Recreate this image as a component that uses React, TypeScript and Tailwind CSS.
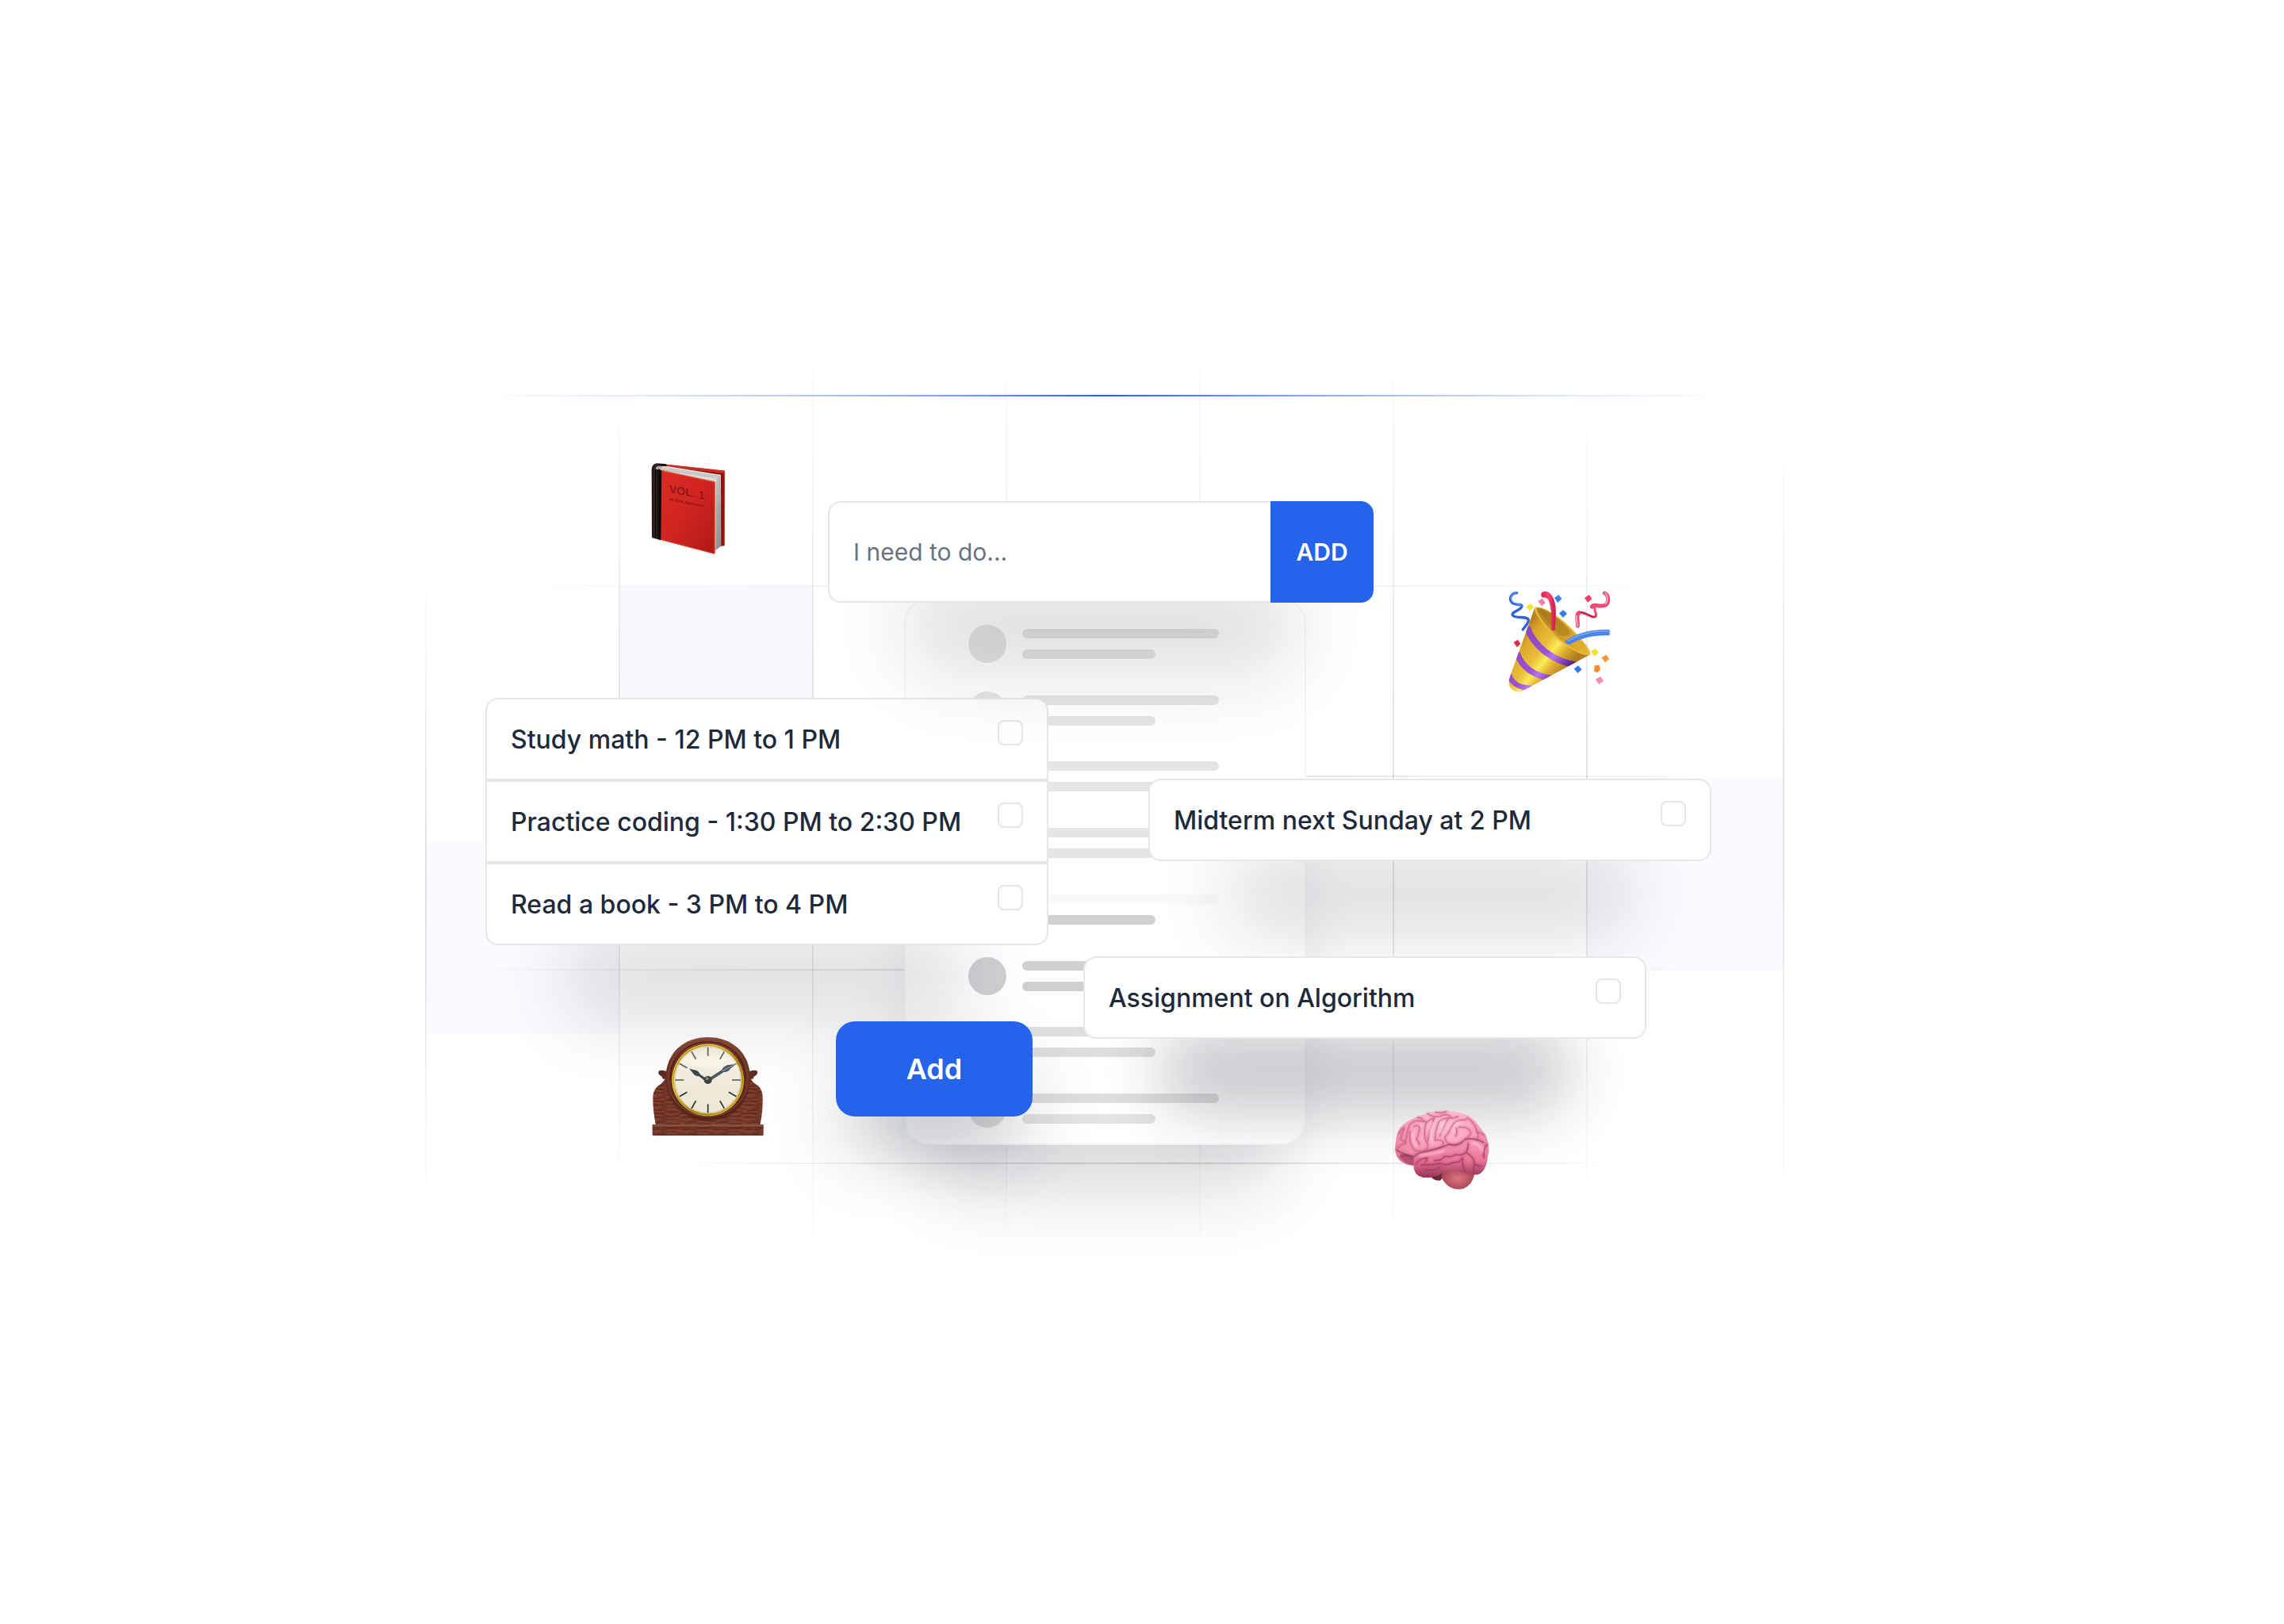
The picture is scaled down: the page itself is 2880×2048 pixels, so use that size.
import type { ReactNode } from "react";

function Book() {
  return (
    <svg viewBox="0 0 420 420" className="block w-full" role="img" aria-label="Book">
      <defs>
        <linearGradient id="bk-cover" x1="0" y1="0" x2="1" y2="1">
          <stop offset="0" stopColor="#dc2c25" />
          <stop offset="0.5" stopColor="#cf2420" />
          <stop offset="1" stopColor="#b01815" />
        </linearGradient>
        <linearGradient id="bk-pages" x1="0" y1="0" x2="0" y2="1">
          <stop offset="0" stopColor="#e6e6e6" />
          <stop offset="0.5" stopColor="#b4b4b4" />
          <stop offset="1" stopColor="#8e8e8e" />
        </linearGradient>
        <linearGradient id="bk-spine" x1="0" y1="0" x2="1" y2="0">
          <stop offset="0" stopColor="#1c1210" />
          <stop offset="0.25" stopColor="#3a2622" />
          <stop offset="0.5" stopColor="#0d0808" />
          <stop offset="1" stopColor="#1d1616" />
        </linearGradient>
      </defs>
      <path d="M118 49 L342 72 L340 354 L300 362 L100 330 L90 60 Z" fill="#7d0f0d" />
      <path d="M112 46 L338 70 Q343 71 343 77 L342 82 L110 55 Z" fill="#c92d22" />
      <path d="M329 88 L342 78 L341 350 Q340 356 334 354 L328 352 Z" fill="#8f100f" />
      <path d="M341 78 L340 352" stroke="#d8502f" strokeWidth="3" />
      <path d="M86 56 L110 52 L327 86 L328 356 L303 374 L110 320 L100 70 Z" fill="url(#bk-pages)" />
      <g fill="none" stroke="#8d8d8d" strokeWidth="1.8">
        <path d="M92 59 L323 91 L323 358" />
        <path d="M94 63 L318 96 L318 362" />
        <path d="M97 66 L312 101 L312 367" />
        <path d="M104 70 L307 107 L307 371" stroke="#efefef" />
      </g>
      <path d="M92 57 L112 56 L326 88 L304 112 L104 70 Z" fill="#dedede" opacity="0.75" />
      <path d="M98 66 L318 97 M106 60 L322 92" stroke="#a0a0a0" strokeWidth="1.6" fill="none" />
      <path d="M98 68 L302 111 Q306 112 306 118 L305 382 Q304 387 298 385 L98 332 Z" fill="url(#bk-cover)" />
      <path d="M105 70 L301 113 Q304 114 304 119 L303 381" fill="none" stroke="#f06a3f" strokeWidth="3.5" opacity="0.85" />
      <path d="M100 331 L299 384" stroke="#e2552c" strokeWidth="3" opacity="0.8" />
      <path d="M65 66 Q67 45 84 43 L116 45 Q124 47 122 54 L92 53 Q80 55 82 64 L103 70 L100 334 L66 324 Z" fill="url(#bk-spine)" />
      <path d="M82 64 Q80 55 92 53 L106 54 L100 62 Z" fill="#a8a8a8" />
      <path d="M80 66 L80 326" stroke="#000" strokeWidth="3" />
      <g fontFamily="Liberation Sans, sans-serif" transform="matrix(1 0.2 0 1 132 154)">
        <text x="1" y="2" fontSize="42" fontWeight="700" fill="#ee5b4e" opacity="0.55">VOL. 1</text>
        <text x="0" y="0" fontSize="42" fontWeight="700" fill="#8e1512">VOL. 1</text>
        <text x="0" y="29" fontSize="14" fontWeight="700" fill="#861311">by John Appleseed</text>
      </g>
    </svg>
  );
}

function Party() {
  return (
    <svg viewBox="0 0 510 480" className="block w-full" role="img" aria-label="Party popper">
      <defs>
        <linearGradient id="pp-cone" x1="100" y1="220" x2="270" y2="360" gradientUnits="userSpaceOnUse">
          <stop offset="0" stopColor="#b9801e" />
          <stop offset="0.18" stopColor="#dfa62a" />
          <stop offset="0.45" stopColor="#e8be38" />
          <stop offset="0.62" stopColor="#fbea58" />
          <stop offset="0.76" stopColor="#e0b432" />
          <stop offset="1" stopColor="#b27a1e" />
        </linearGradient>
        <linearGradient id="pp-in" x1="170" y1="110" x2="370" y2="290" gradientUnits="userSpaceOnUse">
          <stop offset="0" stopColor="#b08222" />
          <stop offset="0.5" stopColor="#cf9a28" />
          <stop offset="1" stopColor="#e8b731" />
        </linearGradient>
        <linearGradient id="pp-vio" x1="100" y1="220" x2="270" y2="360" gradientUnits="userSpaceOnUse">
          <stop offset="0" stopColor="#8a45c0" />
          <stop offset="0.55" stopColor="#9d52d4" />
          <stop offset="0.68" stopColor="#b878ea" />
          <stop offset="1" stopColor="#5d2394" />
        </linearGradient>
        <linearGradient id="pp-red" x1="0" y1="0" x2="1" y2="0">
          <stop offset="0" stopColor="#d81e4c" />
          <stop offset="0.5" stopColor="#f4476f" />
          <stop offset="1" stopColor="#c9184a" />
        </linearGradient>
        <clipPath id="pp-clip">
          <path d="M166 108 C200 190 290 270 376 286 L116 426 Q82 434 68 400 Q66 385 72 370 Z" />
        </clipPath>
      </defs>
      <path d="M166 108 C200 190 290 270 376 286 L116 426 Q82 434 68 400 Q66 385 72 370 Z" fill="url(#pp-cone)" />
      <g clipPath="url(#pp-clip)" fill="none" stroke="url(#pp-vio)">
        <path d="M136 182 C160 250 230 315 335 328" strokeWidth="24" />
        <path d="M98 280 C115 330 160 372 245 378" strokeWidth="23" />
        <path d="M68 362 C78 392 100 414 160 414" strokeWidth="20" />
      </g>
      <path d="M166 108 C196 98 270 148 322 206 C362 248 384 280 374 288 C348 296 276 256 226 204 C186 162 160 122 166 108 Z" fill="#e9bb35" />
      <path d="M174 110 C202 106 268 152 316 208 C352 248 374 276 368 283 C344 286 280 250 232 200 C194 160 170 124 174 110 Z" fill="url(#pp-in)" />
      <path d="M180 114 C200 150 225 180 262 214 C290 220 300 210 300 200 C260 150 210 116 180 114 Z" fill="#8f5f12" opacity="0.3" />
      <path d="M190 56 C196 44 216 44 228 60 C244 80 247 110 245 150 L242 192 Q236 200 227 190 C230 150 230 110 218 82 C210 66 200 74 194 70 Q188 64 190 56 Z" fill="url(#pp-red)" />
      <path d="M278 238 C320 204 380 190 449 192 L449 214 C390 212 345 222 294 250 Z" fill="#4a86ea" />
      <path d="M290 236 C330 208 385 197 449 197" fill="none" stroke="#7fb0fa" strokeWidth="4" />
      <g fill="none" strokeLinecap="round">
        <path d="M98 53 C76 54 66 76 80 90 C94 102 122 92 116 106 C110 120 76 124 82 138 C90 152 140 138 142 156 C142 170 128 180 121 192" stroke="#2e63d6" strokeWidth="10" />
        <path d="M96 52 C76 56 70 74 82 88 C94 98 116 94 116 102" stroke="#5c98f8" strokeWidth="4" />
        <path d="M396 100 C384 122 404 130 396 142 C386 154 354 122 334 128" stroke="#ef4a76" strokeWidth="9" />
        <path d="M430 54 C446 60 448 92 432 100 C414 108 384 92 382 106 M334 128 C320 134 330 160 328 178" stroke="#ef4a76" strokeWidth="15" />
        <path d="M396 142 C386 152 360 126 340 126" stroke="#b3123f" strokeWidth="4" />
        <path d="M432 54 C442 62 444 84 434 94 M324 140 C322 154 328 164 326 178" stroke="#fb9dc0" strokeWidth="6" />
      </g>
      <path d="M178 84 L194 74 L206 90 L192 103 Z" fill="#f27fa5" />
      <path d="M240 72 L256 60 L268 76 L252 90 Z" fill="#3c82f0" />
      <path d="M134 106 L148 93 L162 106 L148 122 Z" fill="#f5e32c" />
      <path d="M258 130 L274 118 L288 132 L272 147 Z" fill="#357cec" />
      <path d="M354 72 L372 60 L382 76 L366 89 Z" fill="#ea3f6b" />
      <path d="M86 240 L102 230 L112 246 L98 259 Z" fill="#d72f55" />
      <path d="M314 340 L330 328 L344 343 L328 357 Z" fill="#3179ea" />
      <path d="M378 274 L396 264 L408 280 L392 293 Z" fill="#f4e235" />
      <path d="M418 298 L436 287 L448 303 L432 316 Z" fill="#f69a35" />
      <path d="M392 328 L410 326 L414 344 L402 354 L390 350 Z" fill="#f38d2b" />
      <path d="M396 380 L414 369 L426 386 L408 399 Z" fill="#f48bb4" />
    </svg>
  );
}

const TICKS = [0, 30, 60, 90, 120, 150, 180, 210, 240, 270, 300, 330];

function Clock() {
  return (
    <svg viewBox="0 0 540 480" className="block w-full" role="img" aria-label="Mantel clock">
      <defs>
        <pattern id="ck-grain" width="118" height="46" patternUnits="userSpaceOnUse">
          <rect width="118" height="46" fill="#703628" />
          <path d="M4 6 Q20 0 40 8 T84 4 M60 14 Q80 20 112 12 M0 22 Q20 28 46 20 M56 28 Q76 22 104 30 M8 38 Q30 32 54 40 T100 40" stroke="#8e4531" strokeWidth="4" fill="none" strokeLinecap="round" />
          <path d="M10 14 Q28 18 52 12 M70 8 Q90 12 114 6 M54 22 Q80 16 110 22 M4 31 Q24 36 46 30 M64 36 Q84 32 112 36" stroke="#55251b" strokeWidth="3" fill="none" strokeLinecap="round" />
        </pattern>
        <linearGradient id="ck-gold" x1="0" y1="0" x2="1" y2="1">
          <stop offset="0" stopColor="#c89a16" />
          <stop offset="0.3" stopColor="#f6e25c" />
          <stop offset="0.6" stopColor="#b98c12" />
          <stop offset="1" stopColor="#f0d84a" />
        </linearGradient>
        <linearGradient id="ck-face" x1="0" y1="0" x2="0" y2="1">
          <stop offset="0" stopColor="#dcd8c8" />
          <stop offset="0.18" stopColor="#f3eedf" />
          <stop offset="1" stopColor="#ece6d4" />
        </linearGradient>
        <linearGradient id="ck-rim" x1="0" y1="0" x2="0" y2="1">
          <stop offset="0" stopColor="#8a4b3c" />
          <stop offset="0.3" stopColor="#6d3225" />
          <stop offset="1" stopColor="#522419" />
        </linearGradient>
        <clipPath id="ck-clip">
          <circle cx="278" cy="216" r="126" />
        </clipPath>
      </defs>
      <path d="M92 182 Q98 176 122 183 L126 212 L108 212 Q106 202 96 198 Q88 190 92 182 Z M464 182 Q458 176 434 183 L430 212 L448 212 Q450 202 460 198 Q468 190 464 182 Z" fill="#5c2a1f" />
      <path d="M118 208 L438 208 Q446 226 468 238 Q487 254 485 290 Q486 330 476 384 L80 384 Q70 330 70 290 Q68 254 90 238 Q110 226 118 208 Z" fill="url(#ck-grain)" />
      <ellipse cx="278" cy="226" rx="156" ry="146" fill="#3b160f" opacity="0.45" />
      <path d="M118 212 C118 110 190 54 278 54 C366 54 438 110 438 212 C438 300 366 364 278 364 C190 364 118 300 118 212 Z" fill="url(#ck-rim)" />
      <path d="M128 212 C128 118 196 64 278 64 C360 64 428 118 428 212 C428 292 360 354 278 354 C196 354 128 292 128 212 Z" fill="none" stroke="#7d4031" strokeWidth="4" />
      <path d="M136 214 C136 126 200 72 278 72 C356 72 420 126 420 214" fill="none" stroke="#4a1f17" strokeWidth="4" />
      <circle cx="278" cy="216" r="136" fill="url(#ck-gold)" />
      <circle cx="278" cy="216" r="131" fill="none" stroke="#8c6a0c" strokeWidth="2" />
      <circle cx="278" cy="216" r="127" fill="url(#ck-face)" />
      <circle cx="278" cy="216" r="125" fill="none" stroke="#bdb69c" strokeWidth="3" opacity="0.7" />
      <path d="M140 80 H420 V170 Q290 190 140 140 Z" fill="#fffdf4" opacity="0.35" clipPath="url(#ck-clip)" />
      {TICKS.map((a) => (
        <line key={a} x1="278" y1="92" x2="278" y2="125" transform={`rotate(${a} 278 216)`} stroke={a > 90 && a < 270 ? "#2f3133" : "#5a666c"} strokeWidth="5" />
      ))}
      <path d="M207 173 L236 180 Q246 186 250 196 L276 212 L270 222 L244 202 Q226 200 220 188 Z" fill="#3e464b" />
      <path d="M384 155 L350 160 Q336 166 330 178 L280 210 L286 220 L338 186 Q356 186 362 174 Z" fill="#4c585f" />
      <path d="M384 155 L332 182" stroke="#9fb2bd" strokeWidth="3" />
      <circle cx="278" cy="216" r="15" fill="#3b4043" />
      <circle cx="275" cy="211" r="6" fill="#7c8488" />
      <rect x="68" y="384" width="420" height="42" rx="4" fill="url(#ck-grain)" />
      <path d="M76 384 L480 384 Q486 386 488 392 L68 392 Q70 386 76 384 Z" fill="#87503f" />
      <path d="M68 395 L488 395 M70 424 L486 424" stroke="#5a281d" strokeWidth="3" />
    </svg>
  );
}

const UPPER_FOLDS = [
  "M72 150 Q76 132 92 126 Q84 150 78 172 Q96 176 96 186 Q80 188 66 204",
  "M96 186 Q100 150 110 120 Q118 104 140 100 L176 104",
  "M128 122 Q148 112 150 128 Q148 152 138 172 Q150 182 150 190",
  "M114 140 Q108 190 132 212 Q160 222 178 208 Q186 190 172 172 Q166 150 172 116 Q180 96 206 90",
  "M206 90 Q186 130 182 176",
  "M222 104 Q208 140 208 174 Q226 170 238 178 Q246 198 220 204 Q196 210 180 216",
  "M222 104 Q236 90 260 90 Q236 130 226 160",
  "M260 90 Q280 92 296 84",
  "M326 96 Q280 94 268 128 Q260 150 246 160 Q246 180 262 188 Q290 198 310 180",
  "M288 126 Q296 146 286 158 M298 124 Q330 120 344 142 Q340 164 320 170",
  "M140 88 Q160 84 166 104 M180 72 Q196 88 226 84 Q250 70 268 84 M210 68 Q232 74 252 66",
  "M330 88 Q364 112 366 140 Q376 156 368 172 M366 140 Q384 146 396 156",
].join(" ");

const LOWER_FOLDS = [
  "M62 210 Q90 230 128 236 Q140 222 176 216 Q220 206 262 190 Q300 198 320 172 Q350 160 392 182",
  "M136 262 Q156 240 180 240 Q178 252 170 256 M206 250 Q236 252 244 234 Q270 240 286 228 Q310 234 326 220 Q336 200 334 186",
  "M156 268 Q200 268 230 262 Q252 272 276 258 Q300 262 312 240 M172 286 Q210 290 228 276",
  "M326 220 Q356 236 358 262 Q366 274 382 272 M314 244 Q308 270 324 292 M358 262 Q352 276 356 296",
  "M404 190 Q388 214 394 240",
  "M82 234 Q104 226 122 246",
].join(" ");

function Brain() {
  return (
    <svg viewBox="0 0 480 420" className="block w-full" role="img" aria-label="Brain">
      <defs>
        <radialGradient id="br-a" cx="0.5" cy="0.15" r="0.9">
          <stop offset="0" stopColor="#ffc8d8" />
          <stop offset="0.4" stopColor="#fba6c0" />
          <stop offset="0.75" stopColor="#e9809f" />
          <stop offset="1" stopColor="#a93b60" />
        </radialGradient>
        <linearGradient id="br-b" x1="0" y1="0" x2="0" y2="1">
          <stop offset="0" stopColor="#fb9aba" />
          <stop offset="0.55" stopColor="#e87799" />
          <stop offset="1" stopColor="#983055" />
        </linearGradient>
        <radialGradient id="br-c" cx="0.5" cy="0.5" r="0.6">
          <stop offset="0" stopColor="#dd7482" />
          <stop offset="1" stopColor="#a03f4d" />
        </radialGradient>
        <filter id="br-soft" x="-10%" y="-10%" width="120%" height="120%">
          <feGaussianBlur stdDeviation="4" />
        </filter>
      </defs>
      <path d="M190 304 Q200 330 228 326 L262 290 Z" fill="#6c2732" />
      <path d="M232 308 Q250 274 300 280 L358 300 Q350 344 316 357 Q270 366 244 332 Q236 324 232 308 Z" fill="url(#br-c)" />
      <path d="M60 180 C62 130 96 98 140 88 C180 62 250 56 296 68 C350 78 372 116 390 140 C412 170 416 204 408 234 C404 272 392 300 366 304 C340 304 310 292 276 288 C240 290 226 310 190 314 C150 320 126 300 128 270 C98 268 74 256 62 230 Q54 206 60 180 Z" fill="url(#br-a)" />
      <path d="M72 232 Q92 214 130 236 L128 270 Q92 262 72 232 Z" fill="#a84467" opacity="0.75" />
      <path d="M128 262 C124 230 154 216 190 216 C230 200 270 196 300 192 C340 160 380 170 398 200 C414 240 398 300 366 304 C340 304 310 292 276 288 C240 290 226 310 190 314 C150 320 126 300 128 262 Z" fill="url(#br-b)" />
      <g fill="none" strokeLinecap="round" strokeLinejoin="round">
        <path d={UPPER_FOLDS} stroke="#d0587f" strokeWidth="8" opacity="0.5" filter="url(#br-soft)" />
        <path d={LOWER_FOLDS} stroke="#a83c62" strokeWidth="9" opacity="0.5" filter="url(#br-soft)" />
        <path d={UPPER_FOLDS} stroke="#c86084" strokeWidth="3" />
        <path d={LOWER_FOLDS} stroke="#9c3a60" strokeWidth="3" />
      </g>
      <g fill="none" strokeLinecap="round" stroke="#ffe2ea" strokeWidth="8" opacity="0.6" filter="url(#br-soft)">
        <path d="M196 108 Q190 140 194 180 M244 106 Q232 126 232 148 M124 150 Q124 180 138 198" />
        <path d="M300 106 Q282 116 278 136 M150 232 Q190 226 240 214 M350 184 Q380 186 388 216" />
      </g>
    </svg>
  );
}

function Glow({ className }: { className: string }) {
  return <div aria-hidden="true" className={"pointer-events-none absolute bg-gray-900 " + className} />;
}

function Task({ id, children, className }: { id: string; children: ReactNode; className?: string }) {
  return (
    <div className={"relative flex h-[104px] items-start justify-between border-2 border-gray-200 bg-white px-[30px] pt-[26px] " + (className ?? "")}>
      <label htmlFor={id} className="text-[32px] leading-[50px] font-medium whitespace-nowrap text-gray-800">
        {children}
      </label>
      <input id={id} type="checkbox" className="size-8 shrink-0 appearance-none rounded-lg border-2 border-gray-200 bg-white" />
    </div>
  );
}

const ROWS = [
  { dot: "bg-[#e5e5e5]", a: "bg-[#e5e5e5]", b: "bg-[#e5e5e5]" },
  { dot: "bg-[#e5e5e5]", a: "bg-[#e5e5e5]", b: "bg-[#e5e5e5]" },
  { dot: "bg-[#e5e5e5]", a: "bg-[#e5e5e5]", b: "bg-[#e5e5e5]" },
  { dot: "bg-[#e5e5e5]", a: "bg-[#e5e5e5]", b: "bg-[#e5e5e5]" },
  { dot: "bg-[#f9f9f9]", a: "bg-[#f9f9f9]", b: "bg-[#cfd0d2]" },
  { dot: "bg-[#cfd0d2]", a: "bg-[#cfd0d2]", b: "bg-[#cfd0d2]" },
  { dot: "bg-[#dedede]", a: "bg-[#dedede]", b: "bg-[#dedede]" },
  { dot: "bg-[#e0e0e0]", a: "bg-[#dedede]", b: "bg-[#e3e3e3]" },
];

const V_LINES = [
  "mt-[310px] h-[820px]",
  "mt-[70px] h-[1060px]",
  "mt-2 h-[1200px]",
  "mt-2 h-[1200px]",
  "mt-2 h-[1200px]",
  "mt-2 h-[1200px]",
  "mt-[100px] h-[1030px]",
  "ml-1 mt-[140px] h-[990px]",
];

const H_LINES = [
  "-mb-1 ml-5 w-[1640px] via-black/8",
  "ml-5 w-[1680px] via-black/14",
  "ml-5 w-[1680px] via-black/14",
  "ml-[280px] w-[1260px] via-black/14",
];

export default function App() {
  return (
    <main className="flex min-h-screen justify-center overflow-hidden bg-white pt-100 pr-24 font-['Inter',sans-serif]">
      <div className="relative isolate h-[1200px] w-[1712px] shrink-0">
        <div className="absolute top-[340px] left-[245px] h-[243px] w-[244px] bg-[#f9f6fe]" />
        <div className="absolute top-[662px] left-[1px] h-[242px] w-[244px] bg-[#fafaff]" />
        <div className="absolute top-[580px] left-[1465px] h-[243px] w-[247px] bg-[#fafbff]" />
        <div aria-hidden="true" className="absolute inset-0 flex gap-[242px]">
          {V_LINES.map((c, i) => (
            <div key={i} className={"w-[2px] shrink-0 bg-linear-to-b from-transparent via-black/12 to-transparent " + c} />
          ))}
        </div>
        <div aria-hidden="true" className="absolute inset-0 flex flex-col gap-[242px] pt-[338px]">
          {H_LINES.map((c, i) => (
            <div key={i} className={"h-[2px] shrink-0 bg-linear-to-r from-transparent to-transparent " + c} />
          ))}
        </div>
        <div className="absolute inset-x-[60px] top-[98px] h-[2px] bg-[linear-gradient(to_right,transparent,rgba(37,99,235,0.12)_12%,rgba(37,99,235,0.34)_26%,rgba(37,99,235,0.58)_37%,#2563eb_50%,rgba(37,99,235,0.58)_65%,rgba(37,99,235,0.34)_76%,rgba(37,99,235,0.12)_88%,transparent)]" />

        <div className="absolute top-[354px] left-[604px] w-[507px]">
          <Glow className="inset-x-8 top-[290px] bottom-[-56px] rounded-[50px] opacity-16 blur-[48px]" />
          <div className="relative rounded-[32px] border-2 border-black/3 bg-white px-[79px] pt-8 pb-5">
            <div className="flex h-[634px] flex-col justify-between">
              {ROWS.map((r, i) => (
                <div key={i} className="flex gap-5">
                  <div className={"size-12 rounded-full " + r.dot} />
                  <div className="flex flex-col gap-[14px] pt-[5px]">
                    <div className={"h-3 w-[248px] rounded-md " + r.a} />
                    <div className={"h-3 w-[168px] rounded-md " + r.b} />
                  </div>
                </div>
              ))}
            </div>
          </div>
        </div>

        <div className="absolute top-[480px] left-[76px] w-[710px]">
          <Glow className="inset-x-24 top-[300px] h-[104px] rounded-[50px] opacity-15 blur-[48px]" />
          <Task id="math" className="rounded-t-2xl">Study math - 12 PM to 1 PM</Task>
          <Task id="coding">Practice coding - 1:30 PM to 2:30 PM</Task>
          <Task id="book" className="rounded-b-2xl">Read a book - 3 PM to 4 PM</Task>
        </div>

        <form className="absolute top-[232px] left-[508px] flex h-32 w-[688px]">
          <Glow className="inset-x-24 top-[92px] h-32 rounded-[50px] opacity-13 blur-[48px]" />
          <input
            aria-label="New task"
            placeholder="I need to do..."
            className="relative min-w-0 flex-1 rounded-l-2xl border-2 border-r-0 border-gray-200 bg-white px-[30px] text-[30px] text-gray-800 outline-none placeholder:text-gray-500"
          />
          <button type="button" className="relative w-[130px] rounded-r-2xl bg-[#2563eb] text-[30px] font-semibold text-white">
            ADD
          </button>
        </form>

        <div className="absolute top-[582px] left-[912px] w-[710px]">
          <Glow className="inset-x-24 top-[92px] h-[104px] rounded-[50px] opacity-15 blur-[48px]" />
          <Task id="midterm" className="rounded-2xl">Midterm next Sunday at 2 PM</Task>
        </div>

        <div className="absolute top-[806px] left-[830px] w-[710px]">
          <Glow className="inset-x-24 top-[92px] h-[104px] rounded-[50px] opacity-24 blur-2xl" />
          <Task id="algo" className="rounded-2xl">Assignment on Algorithm</Task>
        </div>

        <button
          type="button"
          className="absolute top-[888px] left-[518px] h-[120px] w-[248px] rounded-3xl bg-[#2563eb] text-[36px] font-semibold text-white shadow-[0_50px_100px_-24px_rgba(17,24,39,0.38)]"
        >
          Add
        </button>

        <div className="absolute top-[170px] left-[264px] w-[140px]"><Book /></div>
        <div className="absolute top-[330px] left-[1344px] w-[170px]"><Party /></div>
        <div className="absolute top-[890px] left-[264px] w-[180px]"><Clock /></div>
        <div className="absolute top-[980px] left-[1204px] w-[160px]"><Brain /></div>
      </div>
    </main>
  );
}
